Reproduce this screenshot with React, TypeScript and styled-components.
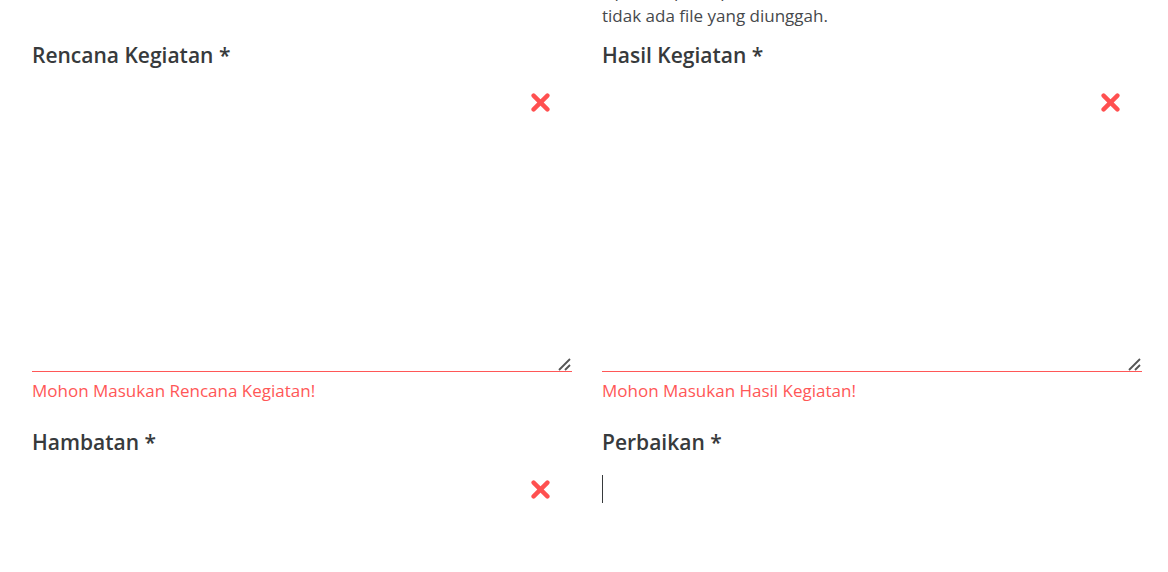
import React from "react";
import styled, { createGlobalStyle } from "styled-components";

const GlobalStyle = createGlobalStyle`
  *, *::before, *::after { box-sizing: border-box; }
  body {
    margin: 0;
    background: #fff;
    color: #373a3c;
    font: 400 17px/25px "Open Sans", sans-serif;
  }
`;

const Viewport = styled.main`
  height: 100vh;
  overflow: hidden;
  padding: 0 26px 0 32px;
`;

const Form = styled.form`
  display: grid;
  grid-template-columns: 1fr 1fr;
  column-gap: 30px;
  margin-top: -22px;
`;

const Hint = styled.p`
  grid-column: 2;
  margin: 0;
  color: #46494c;
`;

const Field = styled.div`
  display: flex;
  flex-direction: column;
  padding: 10px 0 12px;
`;

const Label = styled.label`
  font-size: 21px;
  font-weight: 600;
  line-height: 34px;
  margin-bottom: 9px;
`;

const Control = styled.div`
  position: relative;
  display: flex;
`;

const TextArea = styled.textarea<{ $invalid?: boolean }>`
  flex: 1;
  height: 291px;
  padding: 8px 50px 8px 0;
  border: 0;
  border-bottom: 1px solid ${(p) => (p.$invalid ? "#ff5757" : "#8a8a8a")};
  outline: 0;
  resize: none;
  background: transparent;
  color: inherit;
  font: inherit;
`;

const Cross = styled.svg`
  position: absolute;
  top: 12px;
  right: 22px;
`;

const Grip = styled.svg`
  position: absolute;
  right: 1px;
  bottom: 1px;
`;

const Caret = styled.span`
  position: absolute;
  top: 7px;
  left: 0;
  width: 1px;
  height: 28px;
  background: #373a3c;
`;

const Message = styled.p`
  margin: 6px 0 0;
  color: #ff5757;
`;

type FieldProps = {
  id: string;
  label: string;
  invalid?: boolean;
  message?: string;
  active?: boolean;
};

function TextField({ id, label, invalid, message, active }: FieldProps) {
  return (
    <Field>
      <Label htmlFor={id}>{label} *</Label>
      <Control>
        <TextArea
          id={id}
          $invalid={invalid}
          aria-invalid={invalid}
          aria-describedby={message ? `${id}-message` : undefined}
          required
        />
        {invalid && (
          <Cross width="19" height="19" viewBox="0 0 19 19" aria-hidden="true">
            <path d="M2.6 2.6 16.4 16.4M16.4 2.6 2.6 16.4" stroke="#ff5050" strokeWidth="4.4" strokeLinecap="round" />
          </Cross>
        )}
        {active && <Caret />}
        <Grip width="13" height="13" viewBox="0 0 13 13" aria-hidden="true">
          <path d="M1 12 12 1M7 12 12 7" stroke="#555" strokeWidth="1.8" />
        </Grip>
      </Control>
      {message && <Message id={`${id}-message`}>{message}</Message>}
    </Field>
  );
}

export default function App() {
  return (
    <Viewport>
      <GlobalStyle />
      <Form noValidate>
        <Hint>
          Upload tipe siap,
          <br />
          tidak ada file yang diunggah.
        </Hint>
        <TextField id="rencana" label="Rencana Kegiatan" invalid message="Mohon Masukan Rencana Kegiatan!" />
        <TextField id="hasil" label="Hasil Kegiatan" invalid message="Mohon Masukan Hasil Kegiatan!" />
        <TextField id="hambatan" label="Hambatan" invalid />
        <TextField id="perbaikan" label="Perbaikan" active />
      </Form>
    </Viewport>
  );
}
